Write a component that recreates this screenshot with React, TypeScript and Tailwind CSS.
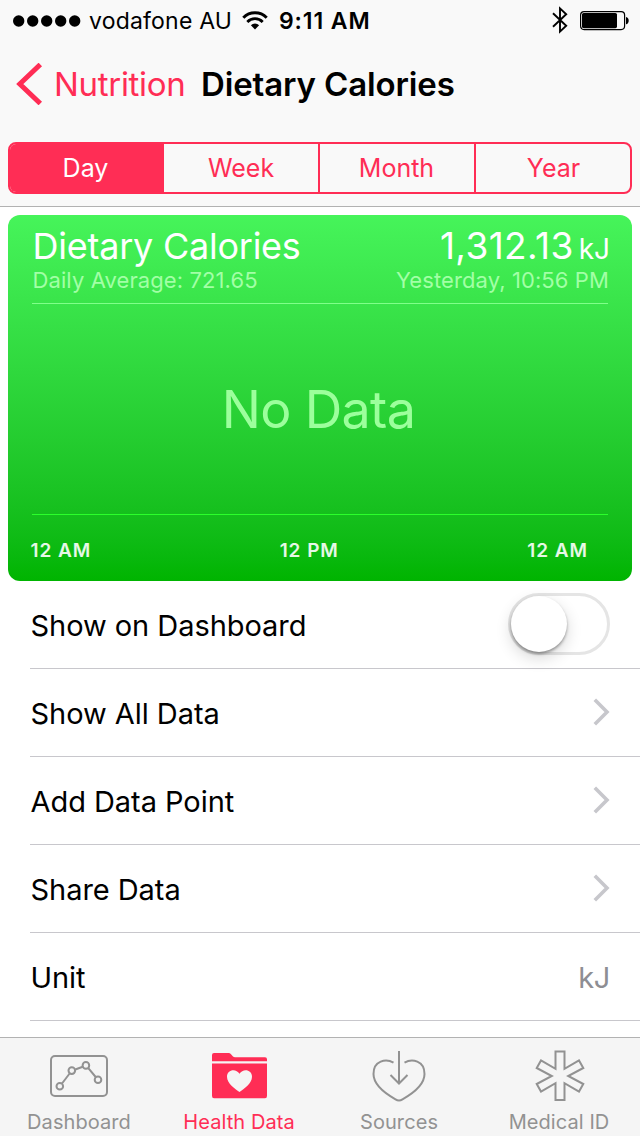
import React, { useState } from 'react';

type Range = 'Day' | 'Week' | 'Month' | 'Year';

const ranges: { key: Range; width: string; padding: string }[] = [
    { key: 'Day', width: 'w-[154px]', padding: 'pr-px' },
    { key: 'Week', width: 'w-[156px]', padding: 'px-0' },
    { key: 'Month', width: 'w-[156px]', padding: 'pr-px' },
    { key: 'Year', width: 'w-[154px]', padding: 'pl-px' },
];

const StatusBar: React.FC = () => (
    <div className="flex h-10 items-center pl-[13px] pr-[11px] text-[23px] leading-10">
        <svg width="68" height="12" viewBox="0 0 68 12" className="mt-px shrink-0">
            {[5.7, 19.7, 33.7, 47.7, 61.7].map(cx => (
                <circle key={cx} cx={cx} cy="6" r="5.7" />
            ))}
        </svg>
        <span className="ml-2 w-[153px] whitespace-nowrap pt-px tracking-[0.2px]">vodafone AU</span>
        <svg width="26" height="19" viewBox="0 0 26 19" className="shrink-0">
            <path d="M1.3 6.7 A16.5 16.5 0 0 1 24.7 6.7" fill="none" stroke="#000" strokeWidth="3" />
            <path d="M5.3 10.9 A10.8 10.8 0 0 1 20.7 10.9" fill="none" stroke="#000" strokeWidth="2.8" />
            <path d="M13 18.4 L8.9 14.3 A5.8 5.8 0 0 1 17.1 14.3 Z" />
        </svg>
        <span className="ml-[11px] whitespace-nowrap pt-px font-semibold tracking-[0.9px]">9:11 AM</span>
        <svg width="16" height="28" viewBox="0 0 16 28" className="ml-auto mr-[12px] shrink-0">
            <path d="M1 7.2 L14.2 19.8 L8 25.6 V2.4 L14.2 8.2 L1 20.8" fill="none" stroke="#000" strokeWidth="1.9" />
        </svg>
        <svg width="49" height="20" viewBox="0 0 49 20" className="mt-[2px] shrink-0">
            <rect x="0.6" y="0.6" width="44" height="18" rx="3.5" fill="none" stroke="#000" strokeWidth="1.2" />
            <rect x="2" y="2" width="35" height="15.2" rx="1.6" />
            <path d="M46 6 C49.6 6.4 49.6 12.9 46 13.2 Z" />
        </svg>
    </div>
);

const NavBar: React.FC = () => (
    <div className="flex h-[88px] items-center pl-4 text-[33px] leading-[44px]">
        <svg width="27" height="42" viewBox="0 0 27 42" className="shrink-0">
            <path d="M24.3 1.5 L3.8 21 L24.3 40.5" fill="none" stroke="#ff2d55" strokeWidth="5" />
        </svg>
        <span className="ml-[11px] w-[147px] whitespace-nowrap tracking-[-0.3px] text-[#ff2d55]">Nutrition</span>
        <h1 className="whitespace-nowrap font-semibold tracking-[-0.13px]">Dietary Calories</h1>
    </div>
);

const Chevron: React.FC = () => (
    <svg width="17" height="28" viewBox="0 0 17 28" className="-mt-px shrink-0">
        <path d="M1.8 1.8 L14 14 L1.8 26.2" fill="none" stroke="#c7c7cc" strokeWidth="3.6" />
    </svg>
);

const DataCard: React.FC = () => (
    <section className="mx-2 mt-2 flex h-[366px] flex-col rounded-[12px] bg-linear-to-b from-[#46f45a] to-[#00b400] px-6 text-white">
        <div className="flex h-[52px] items-start justify-between whitespace-nowrap pt-[2px]">
            <h2 className="ml-[0.5px] text-[36px] leading-[59px] tracking-[-0.24px]">Dietary Calories</h2>
            <div className="-mr-[2px] flex items-start">
                <span className="text-[37px] leading-[58px] tracking-[0.4px]">1,312.13</span>
                <span className="ml-[5px] text-[28px] leading-[65px]">kJ</span>
            </div>
        </div>
        <div className="flex h-[37px] items-start justify-between border-b border-[#80ff8a] text-[22px] leading-[26px] text-[#a2ffa6]">
            <span className="ml-[0.5px] whitespace-nowrap tracking-[0.1px]">Daily Average: 721.65</span>
            <span className="-mr-[1px] whitespace-nowrap tracking-[0.1px]">Yesterday, 10:56 PM</span>
        </div>
        <div className="flex h-[211px] items-center justify-center border-b border-[#2bff2b] pr-[3px] pt-px text-[52px] text-[#9cff9c]">
            <span className="whitespace-nowrap tracking-[-0.7px]">No Data</span>
        </div>
        <div className="-ml-[1.5px] flex h-[66px] items-center justify-between pr-[20px] pt-[6px] text-[19px] font-semibold tracking-[0.95px] text-white/90">
            <span>12 AM</span>
            <span>12 PM</span>
            <span>12 AM</span>
        </div>
    </section>
);

const Row: React.FC<{ label: string; children?: React.ReactNode }> = ({ label, children }) => (
    <li className="ml-[30px] flex h-[88px] items-center justify-between border-b border-[#c8c7cc] pr-[30px] text-[29px]">
        <span className="ml-[0.5px] whitespace-nowrap pt-[2px] tracking-[-0.05px]">{label}</span>
        {children}
    </li>
);

const DashboardIcon = () => (
    <svg width="58" height="42" viewBox="0 0 58 42" fill="none" stroke="#929292" strokeWidth="2">
        <rect x="1" y="1" width="56" height="40" rx="4" />
        <path d="M12 28.5 L20 18 M25.3 14.5 L32.7 11.7 M38.3 13.2 L45.7 22" />
        <circle cx="9.8" cy="31.3" r="3.3" />
        <circle cx="21.8" cy="15.6" r="3.3" />
        <circle cx="35.9" cy="10.4" r="3.3" />
        <circle cx="48" cy="24.7" r="3.3" />
    </svg>
);

const HealthDataIcon = () => (
    <svg width="56" height="46" viewBox="0 0 56 46" fill="#ff2d55" className="ml-[2px]">
        <path d="M0 8.2 V2 Q0 0 2 0 H16.5 Q18 0 19 1.2 L21 3.4 Q21.8 4.2 23 4.2 H53 Q55 4.2 55 6.2 V8.2 Z" />
        <path d="M0 10.4 H55 V43 Q55 45.2 53 45.2 H2 Q0 45.2 0 43 Z" />
        <path d="M27.5 39 C23 36 15 30.5 15 23.8 C15 16.5 24 15 27.5 20.8 C31 15 40 16.5 40 23.8 C40 30.5 32 36 27.5 39 Z" fill="#f5f5f5" />
    </svg>
);

const SourcesIcon = () => (
    <svg width="54" height="52" viewBox="0 0 54 52" fill="none" stroke="#929292" strokeWidth="2">
        <path d="M21.5 12.6 C14 8.5 1.5 10.5 1.5 24 C1.5 36 15 44.5 23.5 49.3 Q27 51.5 30.5 49.3 C39 44.5 52.5 36 52.5 24 C52.5 10.5 40 8.5 32.5 12.6" />
        <path d="M27 1 V33" />
        <path d="M18.5 25 L27 33.5 L35.5 25" />
    </svg>
);

const MedicalIcon = () => (
    <svg width="50" height="52" viewBox="0 0 50 52" fill="none" stroke="#929292" strokeWidth="2" className="ml-[2px]">
        <path d="M20.5 1.5 H29.5 V18.8 L44 10.4 L48.3 18 L33.2 26 L48.3 34 L44 41.6 L29.5 33.2 V50 H20.5 V33.2 L6 41.6 L1.7 34 L16.8 26 L1.7 18 L6 10.4 L20.5 18.8 Z" />
    </svg>
);

const tabs = [
    { label: 'Dashboard', icon: <DashboardIcon />, active: false },
    { label: 'Health Data', icon: <HealthDataIcon />, active: true },
    { label: 'Sources', icon: <SourcesIcon />, active: false },
    { label: 'Medical ID', icon: <MedicalIcon />, active: false },
];

const App: React.FC = () => {
    const [range, setRange] = useState<Range>('Day');
    const [onDashboard, setOnDashboard] = useState(false);

    return (
        <div className="flex h-[1136px] w-[640px] flex-col overflow-hidden bg-white font-['Inter',sans-serif] text-black">
            <header className="h-[207px] shrink-0 border-b border-[#b2b2b2] bg-[#f9f9f9]">
                <StatusBar />
                <NavBar />
                <div className="mx-2 mt-[14px] flex h-[52px] overflow-hidden rounded-[8px] border-2 border-[#ff2d55] bg-[#f9f9f9]">
                    {ranges.map(item => (
                        <button
                            key={item.key}
                            onClick={() => setRange(item.key)}
                            className={`flex items-center justify-center border-r-2 border-[#ff2d55] pt-[2px] text-[25px] last:border-r-0 ${item.width} ${item.padding} ${
                                range === item.key ? 'bg-[#ff2d55] text-white' : 'text-[#ff2d55]'
                            }`}
                        >
                            {item.key}
                        </button>
                    ))}
                </div>
            </header>

            <main className="min-h-0 flex-1 overflow-hidden">
                <DataCard />
                <ul>
                    <Row label="Show on Dashboard">
                        <button
                            onClick={() => setOnDashboard(!onDashboard)}
                            className={`-mt-[2px] flex h-[62px] w-[102px] rounded-full border-[3px] border-[#e5e5e5] ${onDashboard ? 'justify-end bg-[#4cd964]' : 'bg-white'}`}
                        >
                            <span className="size-14 rounded-full bg-white shadow-[0_2px_3px_rgba(0,0,0,0.35),0_6px_16px_rgba(0,0,0,0.16)]" />
                        </button>
                    </Row>
                    <Row label="Show All Data"><Chevron /></Row>
                    <Row label="Add Data Point"><Chevron /></Row>
                    <Row label="Share Data"><Chevron /></Row>
                    <Row label="Unit"><span className="pt-[2px] tracking-[-0.4px] text-[#8e8e93]">kJ</span></Row>
                </ul>
            </main>

            <nav className="flex h-[99px] shrink-0 border-t border-[#b2b2b2] bg-[#f5f5f5]">
                {tabs.map(tab => (
                    <a key={tab.label} className={`flex w-40 flex-col items-center pr-[2px] ${tab.active ? 'text-[#ff2d55]' : 'text-[#929292]'}`}>
                        <span className="flex h-[76px] items-center">{tab.icon}</span>
                        <span className="-mt-px whitespace-nowrap text-[20px] leading-[18px] tracking-[0.08px]">{tab.label}</span>
                    </a>
                ))}
            </nav>
        </div>
    );
};

export default App;
